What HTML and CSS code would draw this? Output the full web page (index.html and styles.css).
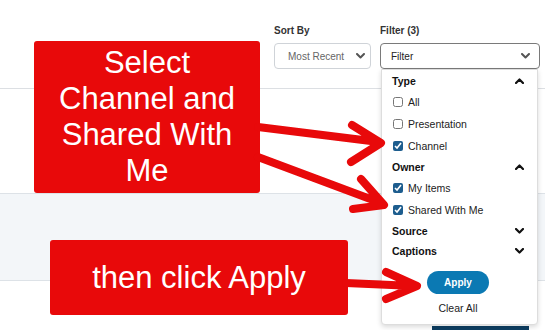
FILE: index.html
```html
<!DOCTYPE html>
<html lang="en">
  <head>
    <meta charset="UTF-8" />
    <title>Filter</title>
    <link rel="stylesheet" href="styles.css">
  </head>
  <body>
    <header class="toolbar">
      <section class="field sort">
        <label>Sort By</label>
        <div class="select">
          <span>Most Recent</span>
          <svg class="chev" width="9" height="6" viewBox="0 0 9 6"><polyline points="1,1 4.5,4.5 8,1" /></svg>
        </div>
      </section>
      <section class="field filter">
        <label>Filter (3)</label>
        <div class="select">
          <span>Filter</span>
          <svg class="chev" width="9" height="6" viewBox="0 0 9 6"><polyline points="1,1 4.5,4.5 8,1" /></svg>
        </div>
      </section>
    </header>

    <main>
      <section class="band"></section>
      <div class="actions">
        <button class="link-btn">Link</button>
      </div>
    </main>

    <section class="dropdown">
      <div class="group">
        <span>Type</span>
        <svg class="caret" width="9" height="6" viewBox="0 0 9 6"><polyline points="1,5 4.5,1.5 8,5" /></svg>
      </div>
      <label class="item"><input type="checkbox" /> All</label>
      <label class="item"><input type="checkbox" /> Presentation</label>
      <label class="item"><input type="checkbox" checked /> Channel</label>
      <div class="group thin">
        <span>Owner</span>
        <svg class="caret" width="9" height="6" viewBox="0 0 9 6"><polyline points="1,5 4.5,1.5 8,5" /></svg>
      </div>
      <label class="item"><input type="checkbox" checked /> My Items</label>
      <label class="item"><input type="checkbox" checked /> Shared With Me</label>
      <div class="group">
        <span>Source</span>
        <svg class="caret" width="9" height="6" viewBox="0 0 9 6"><polyline points="1,1 4.5,4.5 8,1" /></svg>
      </div>
      <div class="group">
        <span>Captions</span>
        <svg class="caret" width="9" height="6" viewBox="0 0 9 6"><polyline points="1,1 4.5,4.5 8,1" /></svg>
      </div>
      <div class="buttons">
        <button class="apply">Apply</button>
        <button class="clear">Clear All</button>
      </div>
    </section>

    <!-- annotations -->
    <div class="callout one">Select Channel and Shared With Me</div>
    <div class="callout two">then click Apply</div>
    <svg class="arrows" width="545" height="330" viewBox="0 0 545 330">
      <path d="M258 127 L379 142 M352 125 L381 143 L351 162" />
      <path d="M258 157 L381 203 M361 179 L384 205 L353 209" />
      <path d="M346 283 L414 286 M386 272 L417 286 L386 299" />
    </svg>
  </body>
</html>
```

FILE: styles.css
```css
body {
  margin: 0;
  padding: 0;
  background-color: #ffffff;
  font-family: "Liberation Sans", Arial, sans-serif;
  width: 545px;
  height: 330px;
  overflow: hidden;
  position: relative;
}

.toolbar {
  height: 89px;
  border-bottom: 1px solid #dcdfe3;
  display: flex;
  justify-content: flex-end;
  gap: 9px;
  padding: 25px 5px 0 0;
  box-sizing: border-box;
}

.field label {
  display: block;
  font-size: 10px;
  font-weight: bold;
  color: #333333;
  margin-bottom: 6px;
  height: 12px;
}

.select {
  height: 26px;
  box-sizing: border-box;
  border: 1px solid #cfd3d8;
  border-radius: 4px;
  display: flex;
  align-items: center;
  justify-content: space-between;
  font-size: 10px;
  background-color: #ffffff;
}

.sort .select {
  width: 97px;
  padding: 0 5px 0 13px;
  color: #666666;
}

.filter .select {
  width: 160px;
  padding: 0 9px 0 10px;
  border-color: #7a7a7a;
  color: #222222;
}

.chev polyline,
.caret polyline {
  fill: none;
  stroke: #555555;
  stroke-width: 2;
  stroke-linecap: round;
  stroke-linejoin: round;
}

.caret polyline {
  stroke: #111111;
  stroke-width: 2.2;
}

.band {
  margin-top: 104px;
  height: 86px;
  background-color: #f3f6f9;
  border-top: 1px solid #dde2e7;
  border-bottom: 1px solid #dde2e7;
}

.actions {
  display: flex;
  justify-content: flex-end;
  padding-right: 16px;
  margin-top: 45px;
}

.link-btn {
  width: 97px;
  height: 24px;
  border: 0;
  background-color: #0d3e62;
  color: #ffffff;
  font-family: "Liberation Sans", Arial, sans-serif;
  font-size: 11px;
  padding: 0;
}

.dropdown {
  position: absolute;
  top: 69px;
  left: 381px;
  width: 157px;
  height: 256px;
  box-sizing: border-box;
  background-color: #ffffff;
  border: 1px solid #dddddd;
  border-radius: 0 0 4px 4px;
  box-shadow: 0 2px 5px #00000026;
  padding: 1px 13px 0 10px;
  font-size: 10.5px;
  color: #222222;
}

.group {
  height: 20px;
  display: flex;
  align-items: center;
  justify-content: space-between;
  font-weight: bold;
  color: #111111;
}

.group.thin {
  font-weight: 600;
}

.item {
  height: 22px;
  display: flex;
  align-items: center;
  gap: 5px;
  padding-left: 1px;
}

.item input {
  margin: 0;
  width: 10px;
  height: 10px;
  accent-color: #1d5d8e;
}

.buttons {
  display: flex;
  flex-direction: column;
  align-items: center;
  margin-top: 10px;
}

.apply {
  width: 62px;
  height: 23px;
  border: 0;
  border-radius: 12px;
  background-color: #0b79b3;
  color: #ffffff;
  font-family: "Liberation Sans", Arial, sans-serif;
  font-weight: bold;
  font-size: 10px;
  padding: 0;
}

.clear {
  margin-top: 8px;
  border: 0;
  background: none;
  font-family: "Liberation Sans", Arial, sans-serif;
  font-size: 10.5px;
  color: #222222;
  padding: 0;
}

.callout {
  position: absolute;
  background-color: #e8090a;
  color: #ffffff;
  border-radius: 3px;
  font-size: 31px;
  text-align: center;
  display: flex;
  align-items: center;
  justify-content: center;
  box-sizing: border-box;
}

.callout.one {
  top: 41px;
  left: 34px;
  width: 226px;
  height: 152px;
  line-height: 36px;
  padding: 0 14px;
}

.callout.two {
  top: 240px;
  left: 50px;
  width: 298px;
  height: 75px;
}

.arrows {
  position: absolute;
  top: 0;
  left: 0;
  pointer-events: none;
}

.arrows path {
  fill: none;
  stroke: #e8090a;
  stroke-width: 8;
  stroke-linecap: round;
  stroke-linejoin: round;
}
```
